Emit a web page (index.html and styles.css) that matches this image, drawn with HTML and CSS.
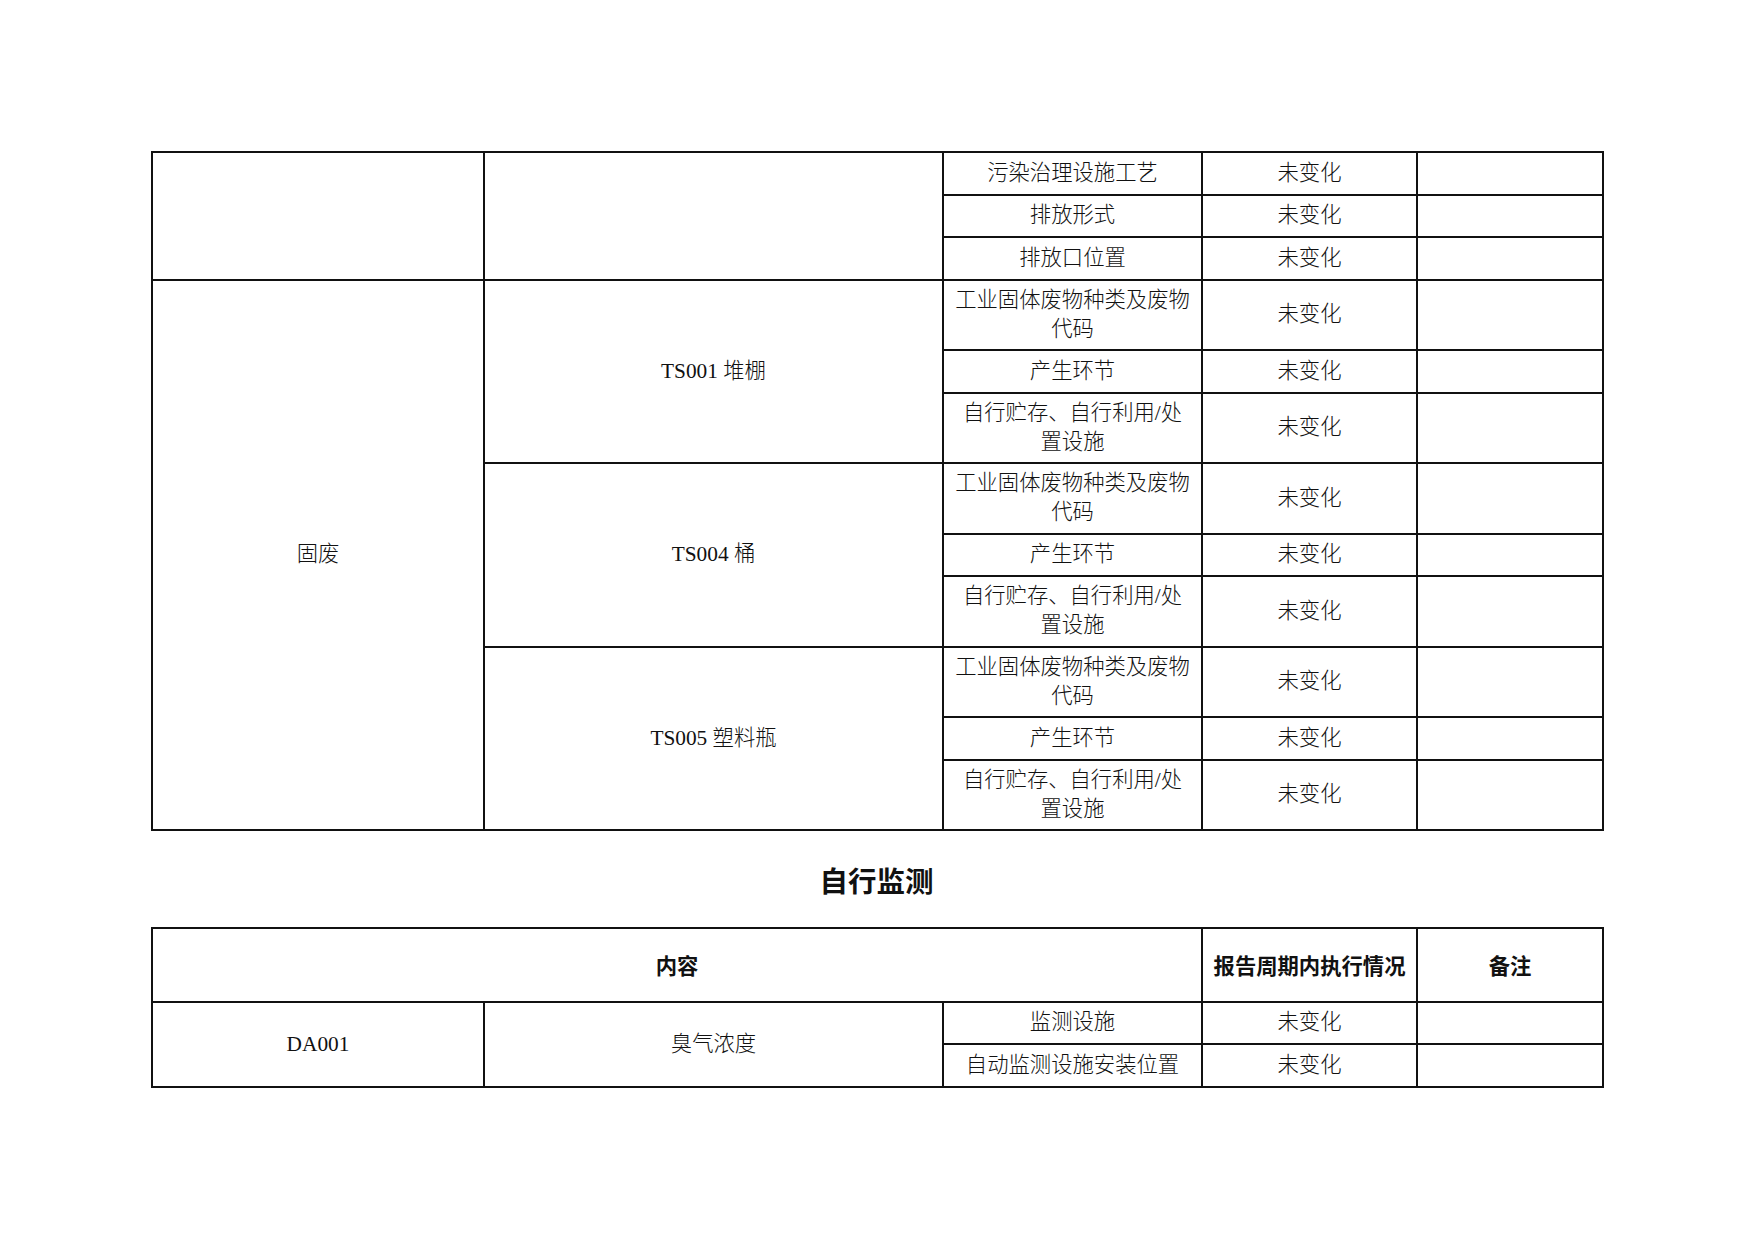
FILE: index.html
```html
<!DOCTYPE html>
<html lang="zh-CN">
<head>
<meta charset="utf-8">
<title>自行监测</title>
<link rel="stylesheet" href="styles.css">
</head>
<body>
<div class="page">
  <table class="grid">
    <colgroup>
      <col class="c1"><col class="c2"><col class="c3"><col class="c4"><col class="c5">
    </colgroup>
    <tbody>
      <tr class="r1">
        <td rowspan="3"></td>
        <td rowspan="3"></td>
        <td>污染治理设施工艺</td>
        <td>未变化</td>
        <td></td>
      </tr>
      <tr class="r1"><td>排放形式</td><td>未变化</td><td></td></tr>
      <tr class="r1"><td>排放口位置</td><td>未变化</td><td></td></tr>

      <tr class="r2">
        <td rowspan="9">固废</td>
        <td rowspan="3">TS001 堆棚</td>
        <td>工业固体废物种类及废物<br>代码</td>
        <td>未变化</td>
        <td></td>
      </tr>
      <tr class="r1"><td>产生环节</td><td>未变化</td><td></td></tr>
      <tr class="r2"><td>自行贮存、自行利用/处<br>置设施</td><td>未变化</td><td></td></tr>

      <tr class="r2">
        <td rowspan="3">TS004 桶</td>
        <td>工业固体废物种类及废物<br>代码</td>
        <td>未变化</td>
        <td></td>
      </tr>
      <tr class="r1"><td>产生环节</td><td>未变化</td><td></td></tr>
      <tr class="r2"><td>自行贮存、自行利用/处<br>置设施</td><td>未变化</td><td></td></tr>

      <tr class="r2">
        <td rowspan="3">TS005 塑料瓶</td>
        <td>工业固体废物种类及废物<br>代码</td>
        <td>未变化</td>
        <td></td>
      </tr>
      <tr class="r1"><td>产生环节</td><td>未变化</td><td></td></tr>
      <tr class="r2"><td>自行贮存、自行利用/处<br>置设施</td><td>未变化</td><td></td></tr>
    </tbody>
  </table>

  <h2 class="section-title">自行监测</h2>

  <table class="grid">
    <colgroup>
      <col class="c1"><col class="c2"><col class="c3"><col class="c4"><col class="c5">
    </colgroup>
    <thead>
      <tr class="rh">
        <th colspan="3">内容</th>
        <th>报告周期内执行情况</th>
        <th>备注</th>
      </tr>
    </thead>
    <tbody>
      <tr class="r1">
        <td rowspan="2">DA001</td>
        <td rowspan="2">臭气浓度</td>
        <td>监测设施</td>
        <td>未变化</td>
        <td></td>
      </tr>
      <tr class="r1"><td>自动监测设施安装位置</td><td>未变化</td><td></td></tr>
    </tbody>
  </table>
</div>
</body>
</html>
```

FILE: styles.css
```css
html, body {
  margin: 0;
  padding: 0;
  background: #ffffff;
}

body {
  font-family: "Liberation Serif", "Noto Sans CJK SC", serif;
  color: #111111;
}

.page {
  padding: 151px 0 0 151px;
  width: 1451px;
}

.grid {
  border-collapse: collapse;
  width: 1451px;
  table-layout: fixed;
  border: 2px solid #111111;
}

.c1 { width: 332px; }
.c2 { width: 459px; }
.c3 { width: 259px; }
.c4 { width: 215px; }
.c5 { width: 186px; }

.grid td,
.grid th {
  border: 2px solid #111111;
  padding: 0 4px;
  text-align: center;
  vertical-align: middle;
  font-size: 21.33px;
  line-height: 29px;
  font-weight: 300;
}

.grid th {
  font-family: "Noto Sans CJK SC", sans-serif;
  font-weight: 700;
}

.r1 { height: 42.5px; }
.r2 { height: 70.5px; }
.rh { height: 73.5px; }

.section-title {
  margin: 0;
  height: 96px;
  display: flex;
  align-items: center;
  justify-content: center;
  font-family: "Noto Sans CJK SC", sans-serif;
  font-size: 28.5px;
  font-weight: 700;
  color: #111111;
}
```
